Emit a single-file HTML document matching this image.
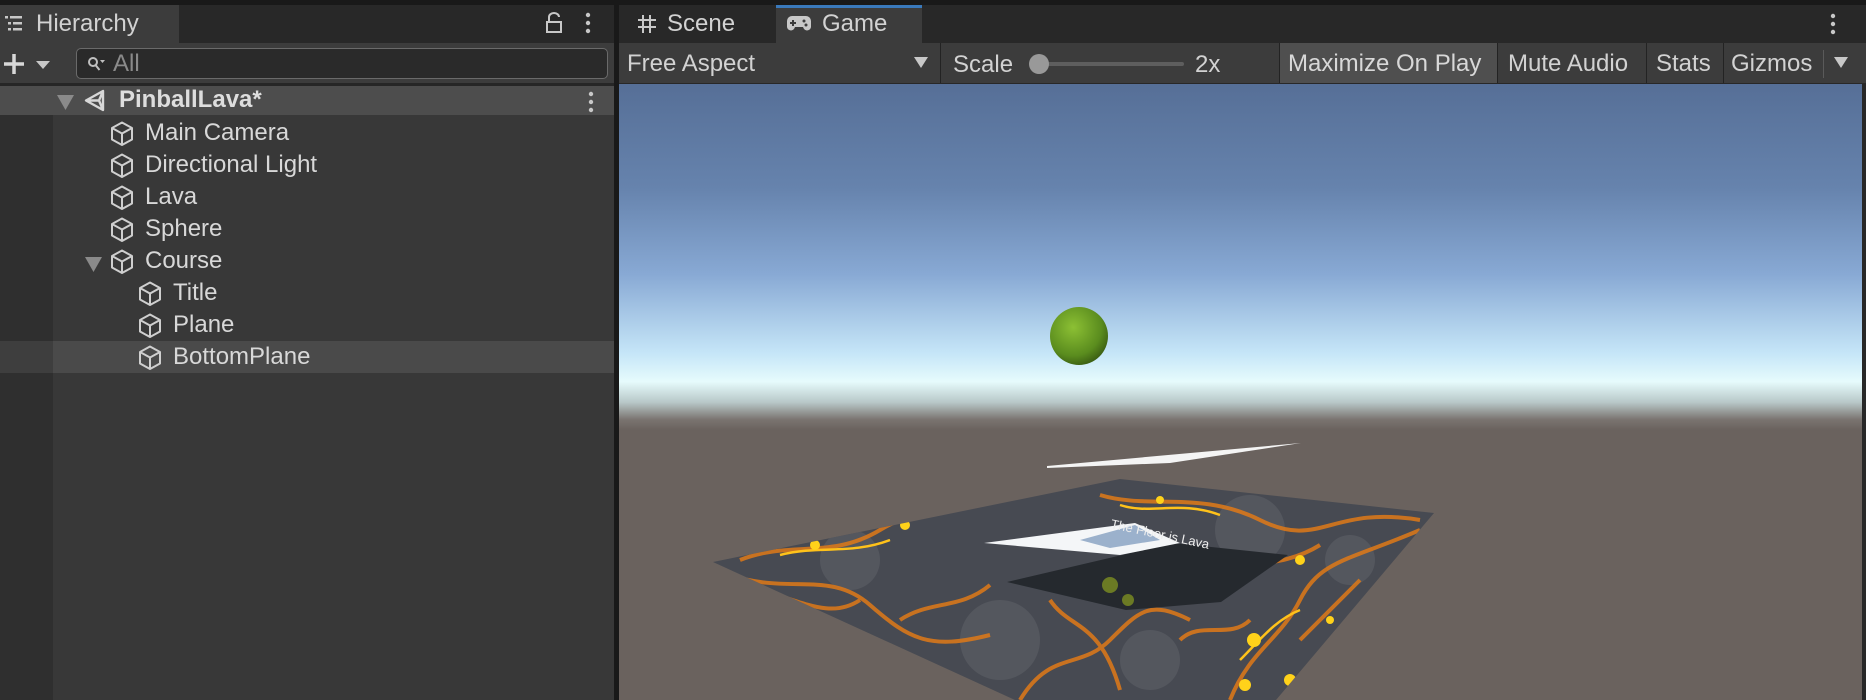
<!DOCTYPE html>
<html><head><meta charset="utf-8"><style>
*{margin:0;padding:0;box-sizing:border-box}
body{width:1866px;height:700px;overflow:hidden;background:#191919;font-family:"Liberation Sans",sans-serif;color:#d2d2d2;position:relative}
.a{position:absolute}
.t{font-size:24px;white-space:nowrap}
.row{position:absolute;left:0;width:614px;height:32px}
.row span{position:absolute;top:2px;font-size:24px;color:#d8d8d8}
.row svg{position:absolute;top:4px}
</style></head><body>
<div class="a" style="left:0;top:5px;width:614px;height:695px;background:#383838"></div>
<div class="a" style="left:0;top:5px;width:614px;height:38px;background:#282828"></div>
<div class="a" style="left:0;top:5px;width:179px;height:38px;background:#3c3c3c"></div>
<svg class="a" style="left:4px;top:15px" width="20" height="18"><g fill="#c8c8c8"><rect x="1" y="1" width="3" height="2.5"/><rect x="6" y="1" width="12" height="2.5"/><rect x="4" y="7" width="3" height="2.5"/><rect x="9" y="7" width="9" height="2.5"/><rect x="4" y="13" width="3" height="2.5"/><rect x="9" y="13" width="9" height="2.5"/></g></svg>
<div class="a t" style="left:36px;top:10px;color:#d2d2d2">Hierarchy</div>
<svg class="a" style="left:545px;top:12px" width="18" height="22"><path d="M4 9V5a5 4 0 0 1 10 0" stroke="#c8c8c8" stroke-width="2" fill="none"/><rect x="2" y="10" width="14" height="10" fill="none" stroke="#c8c8c8" stroke-width="2"/></svg>
<svg class="a" style="left:584px;top:12px" width="8" height="22"><g fill="#c8c8c8"><circle cx="4" cy="3" r="2.2"/><circle cx="4" cy="11" r="2.2"/><circle cx="4" cy="19" r="2.2"/></g></svg>
<div class="a" style="left:0;top:43px;width:614px;height:40px;background:#3c3c3c"></div>
<svg class="a" style="left:3px;top:52px" width="48" height="24"><path d="M1 12H21M11 2V22" stroke="#d8d8d8" stroke-width="3.5"/><path d="M33 9h14l-7 8z" fill="#c8c8c8"/></svg>
<div class="a" style="left:76px;top:48px;width:532px;height:31px;background:#2a2a2a;border:1.5px solid #6a6a6a;border-radius:5px"></div>
<svg class="a" style="left:86px;top:55px" width="20" height="18"><circle cx="7" cy="7" r="4" stroke="#c0c0c0" stroke-width="2" fill="none"/><path d="M9.5 10l4 5" stroke="#c0c0c0" stroke-width="2"/><path d="M14 5h5l-2.5 3z" fill="#c0c0c0"/></svg>
<div class="a t" style="left:113px;top:50px;color:#8a8a8a">All</div>
<div class="a" style="left:0;top:83px;width:614px;height:3px;background:#262626"></div>
<div class="a" style="left:0;top:86px;width:53px;height:614px;background:#2f2f2f"></div>
<div class="a" style="left:0;top:86px;width:614px;height:29px;background:#4d4d4d"></div>
<div class="a" style="left:0;top:341px;width:614px;height:32px;background:#4a4a4a"></div>
<div class="a" style="left:0;top:341px;width:53px;height:32px;background:#3e3e3e"></div>
<svg class="a" style="left:56px;top:93px" width="20" height="18"><path d="M1 2h17l-8.5 15z" fill="#8a8a8a"/></svg>
<svg class="a" style="left:83px;top:88px" width="26" height="25" viewBox="0 0 26 25"><path d="M3 12.5L20 3v19z M3 12.5H16 M20 3l-4 9.5 4 9.5" stroke="#d8d8d8" stroke-width="2.4" fill="none" stroke-linejoin="round"/></svg>
<div class="a t" style="left:119px;top:86px;font-weight:bold;color:#dedede">PinballLava*</div>
<svg class="a" style="left:587px;top:91px" width="8" height="22"><g fill="#c8c8c8"><circle cx="4" cy="3" r="2.2"/><circle cx="4" cy="11" r="2.2"/><circle cx="4" cy="19" r="2.2"/></g></svg>

<svg width="0" height="0" style="position:absolute"><defs><g id="cube"><path d="M12 1.5L22 7v11.5L12 24 2 18.5V7z M2 7l10 5.5L22 7 M12 12.5V24" stroke="#cfcfcf" stroke-width="2" fill="none" stroke-linejoin="round"/></g></defs></svg>

<div class="row" style="top:117px"><svg style="left:110px" width="25" height="26"><use href="#cube"/></svg><span style="left:145px">Main Camera</span></div>
<div class="row" style="top:149px"><svg style="left:110px" width="25" height="26"><use href="#cube"/></svg><span style="left:145px">Directional Light</span></div>
<div class="row" style="top:181px"><svg style="left:110px" width="25" height="26"><use href="#cube"/></svg><span style="left:145px">Lava</span></div>
<div class="row" style="top:213px"><svg style="left:110px" width="25" height="26"><use href="#cube"/></svg><span style="left:145px">Sphere</span></div>
<div class="row" style="top:245px"><svg style="left:84px;top:10px" width="20" height="18"><path d="M1 2h17l-8.5 15z" fill="#8a8a8a"/></svg><svg style="left:110px" width="25" height="26"><use href="#cube"/></svg><span style="left:145px">Course</span></div>
<div class="row" style="top:277px"><svg style="left:138px" width="25" height="26"><use href="#cube"/></svg><span style="left:173px">Title</span></div>
<div class="row" style="top:309px"><svg style="left:138px" width="25" height="26"><use href="#cube"/></svg><span style="left:173px">Plane</span></div>
<div class="row" style="top:341px"><svg style="left:138px" width="25" height="26"><use href="#cube"/></svg><span style="left:173px">BottomPlane</span></div>

<div class="a" style="left:619px;top:5px;width:1247px;height:695px;background:#282828"></div>
<svg class="a" style="left:637px;top:14px" width="20" height="20"><path d="M6 1v18M13 1v18M1 6h18M1 13h18" stroke="#c8c8c8" stroke-width="2"/></svg>
<div class="a t" style="left:667px;top:10px">Scene</div>
<div class="a" style="left:776px;top:5px;width:146px;height:38px;background:#3c3c3c"></div>
<div class="a" style="left:776px;top:5px;width:146px;height:3px;background:#3a79bb"></div>
<svg class="a" style="left:786px;top:15px" width="26" height="17"><path d="M6 1h14a5 5 0 0 1 5 5v6a4 4 0 0 1-7 2l-1-2H9l-1 2a4 4 0 0 1-7-2V6a5 5 0 0 1 5-5z" fill="#c8c8c8"/><path d="M7 5v6M4 8h6" stroke="#3c3c3c" stroke-width="2"/><circle cx="18" cy="6" r="1.5" fill="#3c3c3c"/><circle cx="20" cy="10" r="1.5" fill="#3c3c3c"/></svg>
<div class="a t" style="left:822px;top:10px">Game</div>
<svg class="a" style="left:1829px;top:13px" width="8" height="22"><g fill="#c8c8c8"><circle cx="4" cy="3" r="2.2"/><circle cx="4" cy="11" r="2.2"/><circle cx="4" cy="19" r="2.2"/></g></svg>
<div class="a" style="left:619px;top:43px;width:1247px;height:40px;background:#3c3c3c"></div>
<div class="a t" style="left:627px;top:50px">Free Aspect</div>
<svg class="a" style="left:914px;top:57px" width="14" height="11"><path d="M0 0h14l-7 11z" fill="#c8c8c8"/></svg>
<div class="a" style="left:940px;top:43px;width:1px;height:40px;background:#232323"></div>
<div class="a t" style="left:953px;top:51px">Scale</div>
<div class="a" style="left:1042px;top:62px;width:142px;height:4px;background:#5e5e5e;border-radius:2px"></div>
<div class="a" style="left:1029px;top:54px;width:20px;height:20px;border-radius:50%;background:#999"></div>
<div class="a t" style="left:1195px;top:51px">2x</div>
<div class="a" style="left:1279px;top:43px;width:218px;height:40px;background:#4f4f4f"></div>
<div class="a" style="left:1279px;top:43px;width:1px;height:40px;background:#232323"></div>
<div class="a t" style="left:1288px;top:50px;color:#d8d8d8">Maximize On Play</div>
<div class="a" style="left:1497px;top:43px;width:1px;height:40px;background:#232323"></div>
<div class="a t" style="left:1508px;top:50px">Mute Audio</div>
<div class="a" style="left:1646px;top:43px;width:1px;height:40px;background:#232323"></div>
<div class="a t" style="left:1656px;top:50px">Stats</div>
<div class="a" style="left:1723px;top:43px;width:1px;height:40px;background:#232323"></div>
<div class="a t" style="left:1731px;top:50px">Gizmos</div>
<div class="a" style="left:1823px;top:50px;width:1px;height:28px;background:#5a5a5a"></div>
<svg class="a" style="left:1834px;top:57px" width="14" height="11"><path d="M0 0h14l-7 11z" fill="#c8c8c8"/></svg>
<svg class="a" style="left:619px;top:84px" width="1243" height="616" viewBox="619 84 1243 616">
<defs>
<linearGradient id="sky" x1="0" y1="84" x2="0" y2="430" gradientUnits="userSpaceOnUse">
<stop offset="0" stop-color="#566f97"/><stop offset="0.3" stop-color="#6683ad"/><stop offset="0.55" stop-color="#88a9d4"/><stop offset="0.78" stop-color="#c6e6f8"/><stop offset="0.86" stop-color="#e6fbfc"/><stop offset="0.92" stop-color="#b8c8c8"/><stop offset="0.97" stop-color="#7a7470"/><stop offset="1" stop-color="#6a625e"/></linearGradient>
<radialGradient id="ball" cx="0.4" cy="0.35" r="0.7"><stop offset="0" stop-color="#8cc034"/><stop offset="0.7" stop-color="#5a8c1e"/><stop offset="1" stop-color="#385a12"/></radialGradient>
<clipPath id="lp"><polygon points="1120,479 1434,513 1276,700 1015,700 713,562"/></clipPath>
</defs>
<rect x="619" y="84" width="1243" height="616" fill="#6a625e"/>
<rect x="619" y="84" width="1243" height="346" fill="url(#sky)"/>
<circle cx="1079" cy="336" r="29" fill="url(#ball)"/>
<polygon points="1047,466 1301,443 1170,463 1047,468" fill="#f4f4f4"/>
<polygon points="1120,479 1434,513 1276,700 1015,700 713,562" fill="#474a52"/>
<g clip-path="url(#lp)">
<g fill="#5a5d64" opacity="0.7"><circle cx="850" cy="560" r="30"/><circle cx="1000" cy="640" r="40"/><circle cx="1250" cy="530" r="35"/><circle cx="1150" cy="660" r="30"/><circle cx="1350" cy="560" r="25"/></g>
<g stroke="#e07a18" stroke-width="4" fill="none" opacity="0.85">
<path d="M740,560 C790,540 830,560 880,530 S960,520 1000,495"/>
<path d="M730,575 C790,595 830,570 870,605 S930,650 990,635"/>
<path d="M1100,495 C1150,510 1200,490 1260,520 S1330,505 1420,520"/>
<path d="M1020,700 C1050,650 1080,670 1110,640 S1150,600 1190,620"/>
<path d="M1230,700 C1250,650 1280,640 1300,600 S1350,560 1420,530"/>
<path d="M900,620 C930,600 960,610 990,585"/>
<path d="M1200,580 C1240,560 1280,570 1320,545"/>
<path d="M800,540 C830,520 870,530 900,505"/>
<path d="M1050,600 C1070,630 1100,620 1120,690"/>
<path d="M1300,640 C1320,620 1340,600 1360,580"/>
<path d="M760,590 C800,600 830,620 860,600"/>
<path d="M1180,640 C1200,620 1230,640 1250,620"/>
</g>
<g stroke="#ffc21a" stroke-width="2.5" fill="none">
<path d="M780,555 C820,545 850,555 890,540"/>
<path d="M1240,660 C1260,640 1275,620 1300,610"/>
<path d="M1120,505 C1150,515 1180,500 1220,515"/>
</g>
<g fill="#ffd21a">
<circle cx="1254" cy="640" r="7"/><circle cx="1245" cy="685" r="6"/><circle cx="815" cy="545" r="5"/><circle cx="1300" cy="560" r="5"/><circle cx="1160" cy="500" r="4"/><circle cx="905" cy="525" r="5"/><circle cx="1290" cy="680" r="6"/><circle cx="1040" cy="580" r="4"/><circle cx="1330" cy="620" r="4"/>
</g>
</g>
<polygon points="1007,582 1173,543 1288,555 1221,602 1126,610" fill="#25292e"/>
<circle cx="1110" cy="585" r="8" fill="#6b7a24"/>
<circle cx="1128" cy="600" r="6" fill="#6b7a24"/>
<polygon points="984,543 1135,523 1180,543 1120,555" fill="#f4f6f8"/>
<polygon points="1080,540 1135,525 1160,540 1110,548" fill="#9bb1cc"/>
<text x="1110" y="528" font-size="13" fill="#eee" transform="rotate(12 1110 528)" font-family="Liberation Sans,sans-serif">The Floor is Lava</text>
</svg>
</body></html>
